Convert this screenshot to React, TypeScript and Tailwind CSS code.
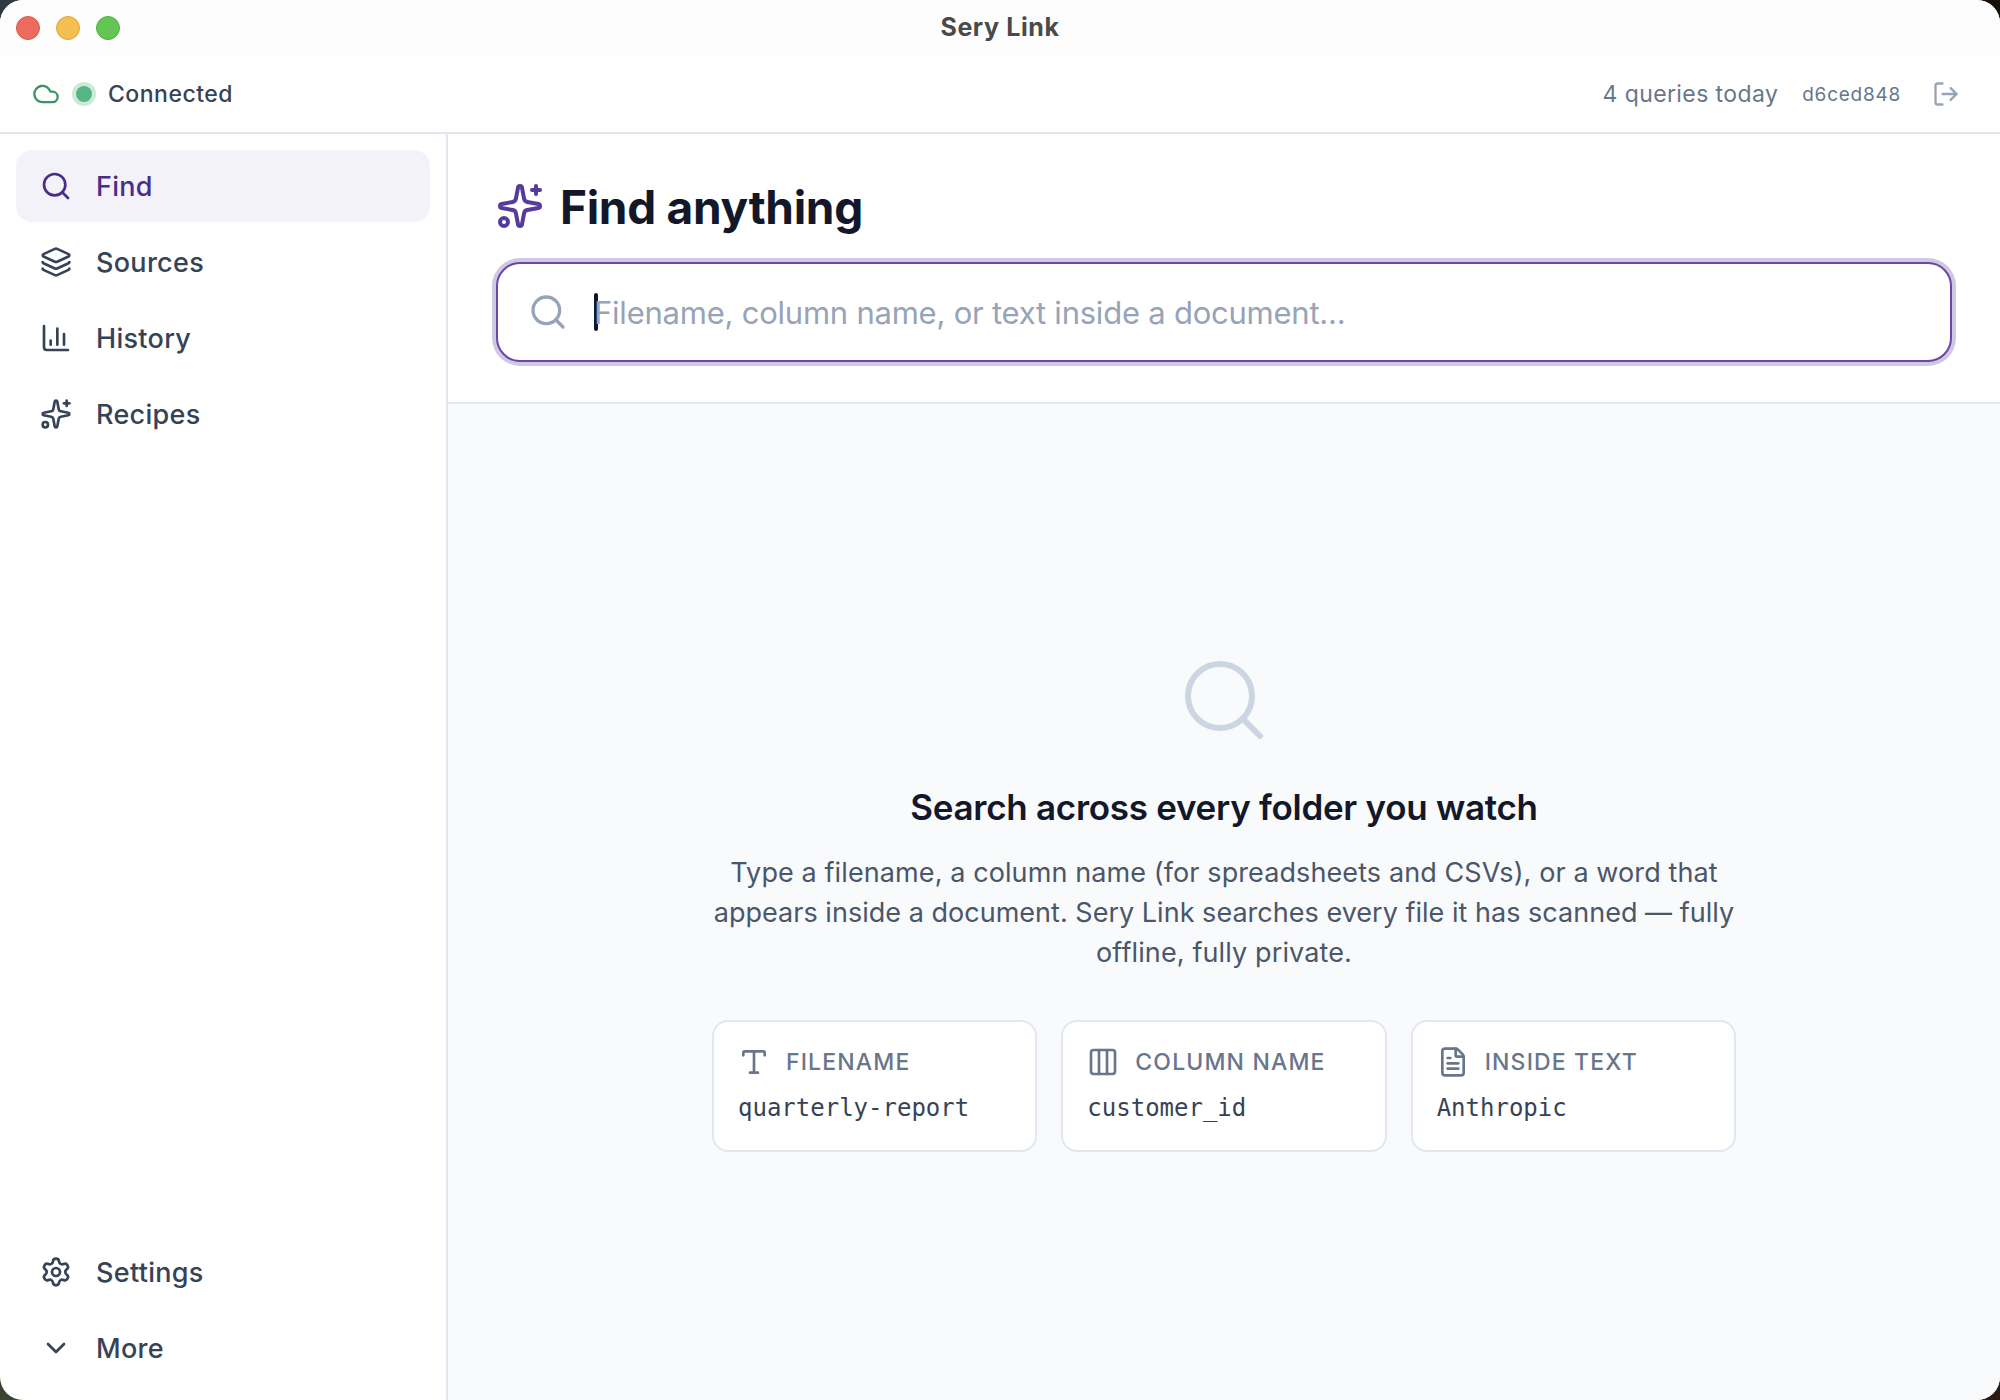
import React from 'react';
import {
  ChartColumn,
  ChevronDown,
  Cloud,
  Columns3,
  FileText,
  Layers,
  LogOut,
  Search,
  Settings,
  Sparkles,
  Type,
  type LucideIcon,
} from 'lucide-react';

interface NavItemProps {
  icon: LucideIcon;
  label: string;
  active?: boolean;
}

const NavItem = ({ icon: Icon, label, active }: NavItemProps) => (
  <button
    className={`flex h-[72px] w-full items-center gap-6 rounded-2xl px-6 text-[27px] font-medium tracking-[0.3px] ${
      active ? 'bg-[#f3f2f9] text-[#4a2c8a]' : 'text-[#364256]'
    }`}
  >
    <Icon className="h-8 w-8 shrink-0" />
    <span className="pt-0.5">{label}</span>
  </button>
);

interface ExampleCardProps {
  icon: LucideIcon;
  label: string;
  example: string;
}

const ExampleCard = ({ icon: Icon, label, example }: ExampleCardProps) => (
  <div className="h-[132px] rounded-2xl border-2 border-[#e2e7ef] bg-white p-6 text-left">
    <div className="flex h-8 items-center gap-4 text-[#68768c]">
      <Icon className="h-8 w-8 shrink-0" />
      <span className="whitespace-nowrap text-[23px] font-medium uppercase tracking-[1.15px]">{label}</span>
    </div>
    <div className="mt-2 font-['DejaVu_Sans_Mono',monospace] text-2xl leading-[44px] text-[#364256]">
      {example}
    </div>
  </div>
);

const App = () => {
  return (
    <div className="h-[1400px] w-[2000px] bg-[conic-gradient(#151008_25%,#2a1c12_25%_50%,#3a4430_50%_75%,#2f3a42_75%)]">
      <div className="flex h-full flex-col overflow-hidden rounded-[23px] bg-white font-['Inter',sans-serif] antialiased">
        {/* Title bar */}
        <div className="grid h-14 shrink-0 grid-cols-[1fr_auto_1fr] items-center bg-[#fdfdfd] px-4">
          <div className="flex gap-4">
            <span className="h-6 w-6 rounded-full border border-[#d65a4f] bg-[#ed6a5e]" />
            <span className="h-6 w-6 rounded-full border border-[#dba544] bg-[#f4bf50]" />
            <span className="h-6 w-6 rounded-full border border-[#54ac45] bg-[#62c554]" />
          </div>
          <span className="text-[25px] font-bold tracking-[0.6px] text-[#4a4a4a]">Sery Link</span>
        </div>

        {/* Status bar */}
        <header className="flex h-[78px] shrink-0 items-center justify-between border-b-2 border-[#e2e7ef] pl-8 pr-10">
          <div className="flex items-center gap-4">
            <Cloud className="h-7 w-7 text-[#3a9468]" />
            <span className="h-4 w-4 rounded-full bg-[#55b685] ring-4 ring-[#cceada]" />
            <span className="text-[23px] font-medium tracking-[0.5px] text-[#364256]">Connected</span>
          </div>
          <div className="flex items-center text-[#68768c]">
            <span className="text-[23px] tracking-[0.4px]">4 queries today</span>
            <span className="ml-6 pt-[3px] text-[19px] tracking-[0.75px]">d6ced848</span>
            <LogOut className="ml-[31px] h-7 w-7 text-[#97a3b7]" />
          </div>
        </header>

        <div className="flex min-h-0 flex-1">
          <aside className="flex w-[448px] shrink-0 flex-col justify-between border-r-2 border-[#e2e7ef] p-4">
            <nav className="flex flex-col gap-1">
              <NavItem icon={Search} label="Find" active />
              <NavItem icon={Layers} label="Sources" />
              <NavItem icon={ChartColumn} label="History" />
              <NavItem icon={Sparkles} label="Recipes" />
            </nav>
            <div className="flex flex-col gap-1">
              <NavItem icon={Settings} label="Settings" />
              <NavItem icon={ChevronDown} label="More" />
            </div>
          </aside>

          <main className="flex min-w-0 flex-1 flex-col bg-[#f9fafc]">
            <section className="h-[270px] shrink-0 border-b-2 border-[#e2e7ef] bg-white px-12 pt-12">
              <div className="flex h-12 items-center gap-4">
                <Sparkles className="h-12 w-12 text-[#553c9a]" />
                <h1 className="pt-0.5 text-[46px] font-bold tracking-[-0.3px] text-[#12182a]">Find anything</h1>
              </div>
              <div className="mt-8 flex h-[100px] items-center rounded-3xl border-2 border-[#6b46a8] bg-white px-[30px] ring-4 ring-[#d0c7e3]">
                <Search className="h-10 w-10 text-[#97a3b7]" />
                <span className="ml-[26px] h-[38px] w-1 rounded-sm bg-[#12182a]" />
                <span className="-ml-1 pt-0.5 text-[31px] tracking-[-0.23px] text-[#97a3b7]">
                  Filename, column name, or text inside a document...
                </span>
              </div>
            </section>

            {/* Empty state */}
            <section className="flex flex-1 flex-col items-center pt-[248px] text-center">
              <Search className="h-24 w-24 text-[#ccd5e1]" strokeWidth={1.5} />
              <h2 className="mt-[31px] text-[35px] font-semibold leading-[56px] tracking-[-0.28px] text-[#12182a]">
                Search across every folder you watch
              </h2>
              <p className="mt-[18px] text-[27px] leading-[40px] text-[#4a566a]">
                <span className="block tracking-[0.1px]">Type a filename, a column name (for spreadsheets and CSVs), or a word that</span>
                <span className="block tracking-[0.02px]">appears inside a document. Sery Link searches every file it has scanned — fully</span>
                <span className="block tracking-[0.12px]">offline, fully private.</span>
              </p>
              <div className="mt-[47px] grid w-[1024px] grid-cols-3 gap-6">
                <ExampleCard icon={Type} label="Filename" example="quarterly-report" />
                <ExampleCard icon={Columns3} label="Column name" example="customer_id" />
                <ExampleCard icon={FileText} label="Inside text" example="Anthropic" />
              </div>
            </section>
          </main>
        </div>
      </div>
    </div>
  );
};

export default App;
